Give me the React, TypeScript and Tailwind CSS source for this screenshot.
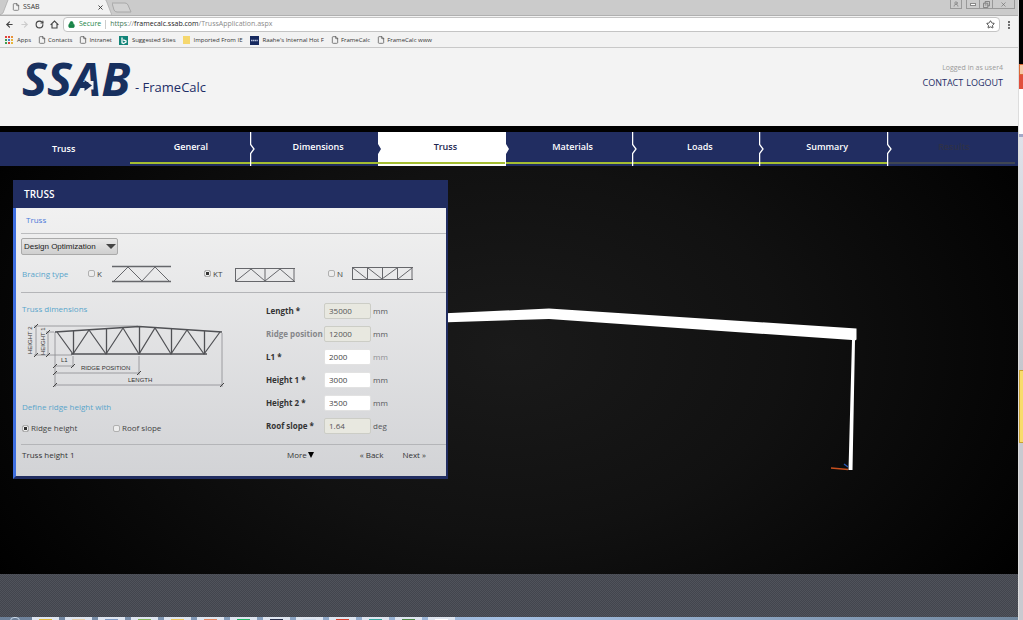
import type { ReactNode } from "react";
import { ArrowLeft, ArrowRight, File, Lock, MoreVertical, RotateCw, Star, X, UserRound } from "lucide-react";

const line = { fill: "none", stroke: "#66676b" };

function Bookmark({ children, icon }: { children: ReactNode; icon?: ReactNode }) {
  return (
    <a href="#" className={"flex items-center whitespace-nowrap " + (icon ? "gap-1" : "gap-[2px]")}>
      {icon ?? <File className="size-2 text-[#444]" strokeWidth={2} />}
      {children}
    </a>
  );
}

function AppsIcon() {
  const colors = ["#e0443a", "#e0443a", "#e8913a", "#3f9b50", "#4a7bd0", "#e8b53a", "#3f9b50", "#e0443a", "#e8b53a"];
  return (
    <svg viewBox="0 0 8 8" className="size-2">
      {colors.map((c, i) => (
        <rect key={i} x={(i % 3) * 3} y={Math.floor(i / 3) * 3} width="2" height="2" fill={c} />
      ))}
    </svg>
  );
}

function BrowserChrome() {
  return (
    <div className="font-['Open_Sans','Noto_Sans',sans-serif] text-[#333]">
      <div className="flex h-4 items-end justify-between border-b border-[#b0b0b0] bg-[#cbcbcb]">
        <div className="flex h-4 items-end">
          <div className="relative flex h-4 w-[112px] items-center pl-3 pr-2 text-[7px]">
            <svg viewBox="0 0 112 16" preserveAspectRatio="none" className="absolute inset-0 size-full">
              <path d="M0 16 L3 14 L8 1 L9 0 H104 L106 1 L111 14 L112 16Z" fill="#f2f2f2" stroke="#a6a6a6" strokeWidth=".7" />
            </svg>
            <File className="relative size-2 text-[#555]" />
            <span className="relative flex-1 pl-[3px]">SSAB</span>
            <button aria-label="Close tab" className="relative"><X className="size-[7px] text-[#333]" strokeWidth={3} /></button>
          </div>
          <button aria-label="New tab" className="mb-[2px]">
            <svg viewBox="0 0 20 11" className="h-[11px] w-5">
              <path d="M0 1H13Q15 1 16 3L19 10H5Q3 10 2 8Z" fill="#d2d2d2" stroke="#a8a8a8" />
            </svg>
          </button>
        </div>
        <div className="flex h-full items-start gap-1 pr-[3px] text-[#666]">
          <button aria-label="Profile" className="flex h-[9px] w-3 items-center justify-center border border-t-0 border-[#999]"><UserRound className="size-[6px]" /></button>
          <div className="flex">
            <button aria-label="Minimize" className="flex h-[9px] w-[14px] items-center justify-center border border-t-0 border-[#999]"><span className="h-[3px] w-[6px] border border-[#888] bg-white" /></button>
            <button aria-label="Restore" className="flex h-[9px] w-[13px] items-center justify-center border border-l-0 border-t-0 border-[#999]">
              <svg viewBox="0 0 8 8" className="size-[7px]" fill="none" stroke="#777"><path d="M2.5 2.5V.5H7.5V5.5H5.5M.5 2.5H5.5V7.5H.5ZM2 4.5H4" /></svg>
            </button>
            <button aria-label="Close" className="flex h-[9px] w-[22px] items-center justify-center border border-l-0 border-t-0 border-[#999]"><X className="size-[7px]" strokeWidth={2} /></button>
          </div>
        </div>
      </div>
      <div className="flex h-[17px] items-center bg-[#f2f2f2] pl-[5px] pr-1">
        <div className="flex w-[58px] items-center gap-[6px]">
          <button aria-label="Back"><ArrowLeft className="size-[9px] text-[#444]" strokeWidth={3} /></button>
          <button aria-label="Forward"><ArrowRight className="size-[9px] text-[#ccc]" strokeWidth={3} /></button>
          <button aria-label="Reload"><RotateCw className="size-[9px] text-[#444]" strokeWidth={3} /></button>
          <button aria-label="Home">
            <svg viewBox="0 0 9 9" className="size-[9px]" fill="none" stroke="#444" strokeWidth="1.1"><path d="M.6 4.800L4.500 1L8.400 4.800M2 4V8H7V4" /></svg>
          </button>
        </div>
        <div className="flex h-[15px] flex-1 items-center rounded-sm border border-[#c4c4c4] bg-white px-1 text-[7px]">
          <Lock className="size-[7px] fill-[#198548] text-[#198548]" strokeWidth={3} />
          <span className="pl-1 text-[#198548]">Secure</span>
          <span className="ml-1 mr-1 h-[9px] w-px bg-[#ccc]" />
          <span className="flex-1 text-[#8a8a8a]"><span className="text-[#3f7a58]">https</span>://<span className="text-[#222]">framecalc.ssab.com</span>/TrussApplication.aspx</span>
          <button aria-label="Bookmark page"><Star className="size-[9px] text-[#444]" strokeWidth={2.5} /></button>
        </div>
        <button aria-label="Menu" className="ml-1"><MoreVertical className="size-[10px] text-[#444]" strokeWidth={3} /></button>
      </div>
      <div className="flex h-[15px] items-center gap-[7px] border-b border-[#c8c8c8] bg-[#f2f2f2] pl-[5px] text-[6px]">
        <Bookmark icon={<AppsIcon />}>Apps</Bookmark>
        <Bookmark>Contacts</Bookmark>
        <Bookmark>Intranet</Bookmark>
        <Bookmark icon={<svg viewBox="0 0 9 9" className="size-[9px]"><rect width="9" height="9" fill="#128478" /><path d="M3 1.5V6.8L4.5 7.6L7 6.2V5L4.2 3.8" fill="none" stroke="#fff" strokeWidth="1.3" /></svg>}>Suggested Sites</Bookmark>
        <Bookmark icon={<span className="h-2 w-[7px] bg-[#f5d76e]" />}>Imported From IE</Bookmark>
        <Bookmark icon={<svg viewBox="0 0 9 9" className="size-[9px]"><rect width="9" height="9" fill="#16295e" /><path d="M1 4.5H8" stroke="#b8c2dc" strokeWidth="1.5" strokeDasharray="1.4 .4" /></svg>}>
          <span>Raahe's Internal Hot F</span>
        </Bookmark>
        <Bookmark>FrameCalc</Bookmark>
        <Bookmark>FrameCalc www</Bookmark>
      </div>
    </div>
  );
}

function SiteHeader() {
  return (
    <header className="flex h-[78px] items-start justify-between bg-[#f3f3f3] pl-[22px] pr-[15px] text-[#1d2d66]">
      <div className="flex">
        <svg viewBox="0 0 111 60" className="mt-[3px] h-[60px] w-[111px] overflow-visible">
          <text x="0" y="45" fill="#17305f" className="font-['Open_Sans'] text-[47px] font-bold italic">SSAB</text>
          <path d="M67 30H71.500V38.500H63Z" fill="#f3f3f3" />
          <path d="M62.500 29L70 34.500L62.500 40Z" fill="#17305f" />
        </svg>
        <div className="ml-[2px] mt-[30px] text-[13px] leading-[18px]">- FrameCalc</div>
      </div>
      <div className="mt-[15px] text-right">
        <div className="text-[7px] leading-[10px] text-[#9a9a9a]">Logged in as user4</div>
        <div className="mt-[3px] flex gap-[3px] text-[9px] leading-[14px]">
          <a href="#">CONTACT</a>
          <a href="#">LOGOUT</a>
        </div>
      </div>
    </header>
  );
}

function Divider({ notch }: { notch?: boolean }) {
  return (
    <svg viewBox="0 0 6 34" className="absolute left-0 top-0 h-[34px] w-[6px]">
      {notch ? (
        <path d="M0 12L3 17L0 22Z" fill="#212d61" />
      ) : (
        <path d="M.6 0V12.500L4 17L.6 21.500V34" fill="none" stroke="#fff" strokeWidth="1.300" />
      )}
    </svg>
  );
}

function FilledDivider() {
  return (
    <svg viewBox="0 0 6 34" className="absolute left-0 top-0 h-[34px] w-[6px]">
      <path d="M0 0H1V12L4 17L1 22V34H0Z" fill="#fff" />
    </svg>
  );
}

const steps = ["General", "Dimensions", "Truss", "Materials", "Loads", "Summary"];

function StepNav() {
  return (
    <nav className="grid h-10 grid-cols-[123fr_repeat(6,127fr)_131fr] border-t-6 border-black bg-[#212d61] text-[9px] font-semibold leading-[12px] text-white">
      <a href="#" className="flex items-center justify-center pl-1">Truss</a>
      {steps.map((s, i) => (
        <a key={s} href="#" className={"relative flex flex-col " + (s === "Truss" ? "bg-white text-[#1d2650]" : "")}>
          <span className="flex flex-1 items-center justify-center pl-2">{s}</span>
          <span className={"mb-[2px] h-[2px] bg-[#a5be32] " + (i === 0 ? "ml-[7px]" : "")} />
          {i > 0 && (s === "Materials" ? <FilledDivider /> : <Divider notch={s === "Truss"} />)}
        </a>
      ))}
      <span className="relative flex flex-col text-[#2e3148]">
        <span className="flex flex-1 items-center justify-center pl-[3px]">Results</span>
        <span className="mb-[2px] mr-[3px] h-[2px] bg-[#3f4653]" />
        <Divider />
      </span>
    </nav>
  );
}

const braces: Record<string, ReactNode> = {
  K: (
    <svg viewBox="0 0 62 18" className="h-[18px] w-[62px]" {...line}>
      <path d="M1 1.500H60M1 16.500H60" strokeWidth="1.500" />
      <path d="M3 16L17 2L31 16L44 2L58 16" />
    </svg>
  ),
  KT: (
    <svg viewBox="0 0 62 18" className="h-[18px] w-[62px]" {...line}>
      <path d="M1 3.500H61M1 16.500H61" strokeWidth="1.200" />
      <path d="M1.500 3V16M31 3V16M60 3V16M2 16L17 4L31 16L46 4L60 16" />
    </svg>
  ),
  N: (
    <svg viewBox="0 0 62 18" className="h-[18px] w-[62px]" {...line}>
      <path d="M1 2.500H62M1 14.500H62" strokeWidth="1.200" />
      <path d="M1.500 2V15M16.500 2V15M31.500 2V15M46.500 2V15M61 2V15M2 3L16 14M17 3L31 14L46 3M47 14L61 3" />
    </svg>
  ),
};

function Radio({ name, label, checked }: { name: string; label: string; checked?: boolean }) {
  return (
    <label className="flex items-center gap-[2px] whitespace-nowrap">
      <input
        type="radio"
        name={name}
        defaultChecked={checked}
        className="size-[7px] appearance-none rounded-[2px] border border-[#b0b0b0] bg-[#ededed] checked:bg-[#333] checked:shadow-[inset_0_0_0_1px_#ededed]"
      />
      {label}
    </label>
  );
}

function Tick({ x, y }: { x: number; y: number }) {
  return <path d={`M${x - 2} ${y + 2}L${x + 2} ${y - 2}`} stroke="#444" strokeWidth="1" />;
}

function TrussDiagram() {
  return (
    <svg viewBox="0 0 206 72" className="h-[72px] w-[206px]" fill="none">
      <g stroke="#8b8c90" strokeWidth=".8">
        <path d="M12 6H116M24 12H32M12 35H50M14 6V35M26 12V35M33 12V67M51 36V47M117 36V55M200 13V67M33 46H51M33 53H117M33 65H200" />
      </g>
      {[[14, 6], [14, 35], [26, 12], [26, 35], [33, 46], [51, 46], [33, 53], [117, 53], [33, 65], [200, 65]].map(([x, y]) => (
        <Tick key={`${x}-${y}`} x={x} y={y} />
      ))}
      <g stroke="#505155">
        <path d="M33 12L117 6.500L200 12" strokeWidth="1.700" />
        <path d="M49 34H185" strokeWidth="1.700" />
        <path d="M35 12L51 34L67 10L84 34L101 8L117 34L133 8L149 34L165 10L182 34L198 12" strokeWidth="1.200" />
        <path d="M51.500 11V34M84.500 9V34M117.500 6V34M149.500 9V34M182.500 11V34" strokeWidth="1.300" />
      </g>
      <g fill="#333" className="font-['Liberation_Sans',Arial,sans-serif] text-[6px]">
        <text x="39" y="42">L1</text>
        <text x="59" y="50">RIDGE POSITION</text>
        <text x="106" y="62">LENGTH</text>
        <text transform="translate(10 34) rotate(-90)">HEIGHT 2</text>
        <text transform="translate(23 35) rotate(-90)">HEIGHT 1</text>
      </g>
    </svg>
  );
}

const fields = [
  { label: "Length *", value: "35000", unit: "mm", locked: true },
  { label: "Ridge position", value: "12000", unit: "mm", locked: true, dim: true },
  { label: "L1 *", value: "2000", unit: "mm", dimUnit: true },
  { label: "Height 1 *", value: "3000", unit: "mm" },
  { label: "Height 2 *", value: "3500", unit: "mm" },
  { label: "Roof slope *", value: "1.64", unit: "deg", locked: true },
];

function TrussPanel() {
  return (
    <section className="relative w-[435px] text-[8px] leading-[12px] text-[#444]">
      <h2 className="flex h-[28px] items-center bg-[#212d61] px-[11px] text-[10px] font-semibold text-white">TRUSS</h2>
      <div className="border-b-3 border-l-3 border-r-2 border-b-[#212d61] border-l-[#3f6fe0] border-r-[#212d61] bg-linear-to-b from-[#f1f1f1] to-[#d2d3d6]">
        <div className="ml-[5px] flex h-[26px] items-center border-b border-[#bbbcbe] pb-[2px] pl-[5px] text-[#4a78d8]">Truss</div>
        <div className="ml-[5px] border-b border-[#b4b5b8]">
          <div className="relative mt-[4px] w-[97px]">
            <select aria-label="Design mode" className="h-[17px] w-full appearance-none rounded-[2px] border border-[#aaa] bg-linear-to-b from-[#e8e8e8] to-[#cfcfcf] pl-[2px] font-['Liberation_Sans',Arial,sans-serif] text-[8px] text-[#222]">
              <option>Design Optimization</option>
            </select>
            <svg viewBox="0 0 10 5" className="pointer-events-none absolute right-[2px] top-[6px] h-[5px] w-[10px]"><path d="M0 0H10L5 5Z" fill="#444" /></svg>
          </div>
          <div className="flex h-[37px] items-center">
            <span className="w-[67px] pl-px text-[#59a5cb]">Bracing type</span>
            <span className="flex w-[116px] items-center justify-between pr-[31px]"><Radio name="bracing" label="K" />{braces.K}</span>
            <span className="flex w-[124px] items-center justify-between pr-[32px]"><Radio name="bracing" label="KT" checked />{braces.KT}</span>
            <span className="flex w-[85px] items-center justify-between"><Radio name="bracing" label="N" />{braces.N}</span>
          </div>
        </div>
        <div className="ml-[5px] flex h-[152px] border-b border-[#b4b5b8]">
          <div className="w-[245px] pl-px pt-[10px]">
            <div className="text-[#59a5cb]">Truss dimensions</div>
            <div className="mt-[5px]"><TrussDiagram /></div>
            <div className="mt-[9px] text-[#59a5cb]">Define ridge height with</div>
            <div className="mt-[9px] flex">
              <span className="w-[91px]"><Radio name="ridge" label="Ridge height" checked /></span>
              <Radio name="ridge" label="Roof slope" />
            </div>
          </div>
          <div className="flex flex-col gap-[7px] pt-[10px]">
            {fields.map((f) => (
              <div key={f.label} className="flex h-4 items-center">
                <label htmlFor={f.label} className={"w-[58px] whitespace-nowrap font-bold " + (f.dim ? "text-[#85868a]" : "text-[#333]")}>{f.label}</label>
                <input
                  id={f.label}
                  defaultValue={f.value}
                  readOnly={f.locked}
                  className={"h-4 w-[47px] rounded-[2px] border pb-[2px] pl-1 " + (f.locked ? "border-[#cccdc6] bg-[#e8e8e0] text-[#555]" : "border-[#e2e2e2] bg-white text-[#444]")}
                />
                <span className={"pl-[2px] " + (f.dimUnit ? "text-[#8e8f93]" : "text-[#55565a]")}>{f.unit}</span>
              </div>
            ))}
          </div>
        </div>
        <div className="ml-[6px] flex h-[31px] pr-[20px] pt-[4px] text-[#333]">
          <span className="w-[265px]">Truss height 1</span>
          <button className="flex h-3 items-center gap-px">More<svg viewBox="0 0 6 6" className="size-[6px]"><path d="M0 0H6L3 6Z" fill="#000" /></svg></button>
          <span className="flex flex-1 justify-end gap-[19px]">
            <button className="h-3">« Back</button>
            <button className="h-3">Next »</button>
          </span>
        </div>
      </div>
    </section>
  );
}

function Stage() {
  return (
    <main className="relative flex-1 bg-[radial-gradient(ellipse_60%_100%_at_50%_45%,#1a1a1a,#111_45%,#000)] px-[13px] pb-[95px] pt-[14px]">
      <svg viewBox="0 0 1018 407" className="absolute inset-0 size-full">
        <path d="M440 147L549 142L856.500 162V173L855 174L852.500 303.500H848.500L852 173.500L549 152.500L440 156Z" fill="#fff" />
        <path d="M831 301.500L848 303" stroke="#c8501e" strokeWidth="1.300" />
        <path d="M844 297.500L848 300.500" stroke="#2858b8" strokeWidth="1.300" />
      </svg>
      <TrussPanel />
    </main>
  );
}

const tasks = ["#e0b93a", "#e6cfa8", "#7f9cc4", "#86b85c", "#edc85a", "#e58a62", "#20b564", "#26304a", "#cfdcec", "#d8402c", "#35a8a0", "#4c8a48", "#ffffff"];

function Taskbar() {
  return (
    <footer className="flex h-1 gap-[6px] overflow-hidden bg-linear-to-r from-[#6c8098] via-[#a5c1e4] to-[#71879d] pl-[10px]">
      <span className="mr-[6px] h-2 w-[10px] shrink-0 rounded-full border border-[#c8d8e8]" />
      {tasks.map((c) => (
        <span key={c} className="flex w-[27px] shrink-0 justify-center bg-[#dfe6f0] pt-[2px]">
          <span className="h-1 w-[13px] shrink-0" style={{ backgroundColor: c }} />
        </span>
      ))}
    </footer>
  );
}

function BackgroundWindowEdge() {
  return (
    <aside className="flex w-[5px] flex-col border-l border-[#ddd] bg-[#c9cad0]">
      <div className="h-16 bg-black" />
      <div className="h-[11px] border border-r-0 border-[#d96a36] bg-[#f4c9a8]" />
      <div className="h-[14px] bg-[#e0503c]" />
      <div className="h-[45px] bg-white" />
      <div className="h-[3px] bg-[#a3a8c8]" />
      <div className="h-[233px] bg-linear-to-b from-[#dfe2ea] to-[#c6c7cd]" />
      <div className="h-[73px] border border-r-0 border-[#c8a030] bg-[#f8dc6c]" />
    </aside>
  );
}

export default function App() {
  return (
    <div className="flex min-h-screen bg-black font-['Open_Sans','Noto_Sans',sans-serif]">
      <div className="flex min-w-0 flex-1 flex-col">
        <BrowserChrome />
        <SiteHeader />
        <StepNav />
        <Stage />
        <div className="h-[43px] bg-[#484b53] bg-[repeating-conic-gradient(#42454d_0_25%,#50535b_0_50%)] bg-size-[2px_2px]" />
        <Taskbar />
      </div>
      <BackgroundWindowEdge />
    </div>
  );
}
